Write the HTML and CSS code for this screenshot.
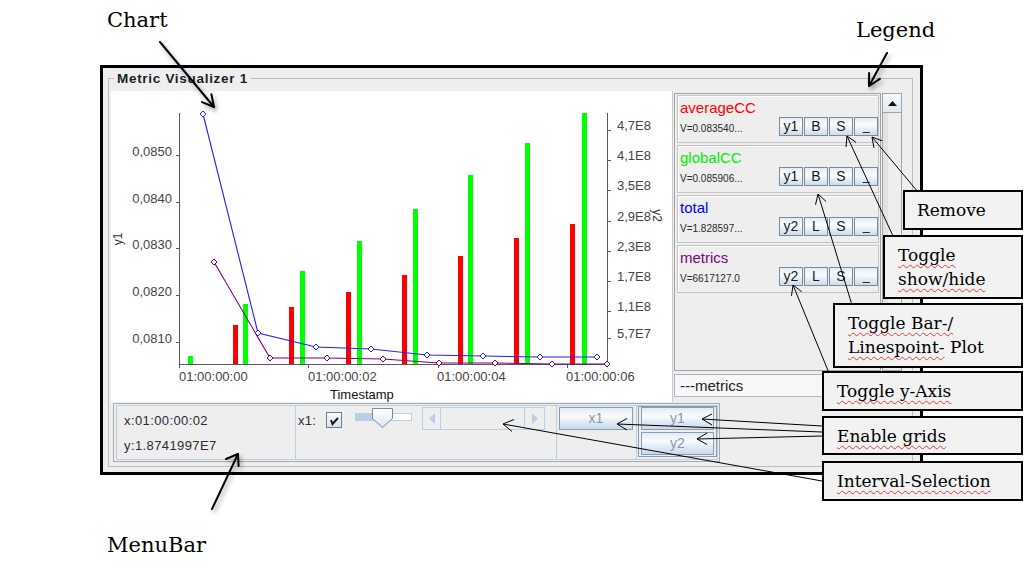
FILE: index.html
```html
<!DOCTYPE html>
<html>
<head>
<meta charset="utf-8">
<title>Metric Visualizer</title>
<link rel="stylesheet" href="styles.css">
</head>
<body>
<div class="page">
  <div class="window">
    <fieldset class="titled">
      <legend class="title">Metric Visualizer 1</legend>
      <div class="main">
        <div class="chart">
          <svg width="561" height="311" viewBox="111 91 561 311" xmlns="http://www.w3.org/2000/svg">
            <defs>
              <path id="dm" d="M0,-3 L3,0 L0,3 L-3,0 Z"/>
            </defs>
            <rect x="111" y="91" width="561" height="311" fill="#fff"/>
            <g fill="#00ff00">
              <rect x="188" y="356" width="5" height="8"/>
              <rect x="243" y="304" width="5" height="60"/>
              <rect x="300" y="271" width="5" height="93"/>
              <rect x="357" y="241" width="5" height="123"/>
              <rect x="413" y="209" width="5" height="155"/>
              <rect x="468" y="175" width="5" height="189"/>
              <rect x="525" y="143" width="5" height="221"/>
              <rect x="582" y="113" width="5" height="251"/>
            </g>
            <g fill="#ff0000">
              <rect x="233" y="325" width="5" height="39"/>
              <rect x="289" y="307" width="5" height="57"/>
              <rect x="346" y="292" width="5" height="72"/>
              <rect x="402" y="275" width="5" height="89"/>
              <rect x="458" y="256" width="5" height="108"/>
              <rect x="514" y="238" width="5" height="126"/>
              <rect x="570" y="224" width="5" height="140"/>
            </g>
            <g stroke="#5a5a5a" stroke-width="1" fill="none">
              <line x1="179.5" y1="113" x2="179.5" y2="365"/>
              <line x1="179" y1="364.5" x2="608" y2="364.5"/>
              <line x1="607.5" y1="113" x2="607.5" y2="365"/>
              <line x1="176" y1="155.5" x2="179" y2="155.5"/>
              <line x1="176" y1="202.5" x2="179" y2="202.5"/>
              <line x1="176" y1="248.5" x2="179" y2="248.5"/>
              <line x1="176" y1="295.5" x2="179" y2="295.5"/>
              <line x1="176" y1="342.5" x2="179" y2="342.5"/>
              <line x1="179.5" y1="365" x2="179.5" y2="368"/>
              <line x1="308.5" y1="365" x2="308.5" y2="368"/>
              <line x1="438.5" y1="365" x2="438.5" y2="368"/>
              <line x1="567.5" y1="365" x2="567.5" y2="368"/>
              <line x1="608" y1="130.5" x2="611" y2="130.5"/>
              <line x1="608" y1="160.5" x2="611" y2="160.5"/>
              <line x1="608" y1="190.5" x2="611" y2="190.5"/>
              <line x1="608" y1="221.5" x2="611" y2="221.5"/>
              <line x1="608" y1="251.5" x2="611" y2="251.5"/>
              <line x1="608" y1="281.5" x2="611" y2="281.5"/>
              <line x1="608" y1="311.5" x2="611" y2="311.5"/>
              <line x1="608" y1="338.5" x2="611" y2="338.5"/>
            </g>
            <g class="ticklbl" text-anchor="end">
              <text x="172" y="156">0,0850</text>
              <text x="172" y="203">0,0840</text>
              <text x="172" y="249">0,0830</text>
              <text x="172" y="296">0,0820</text>
              <text x="172" y="343">0,0810</text>
            </g>
            <g class="ticklbl">
              <text x="179" y="381">01:00:00:00</text>
              <text x="308" y="381">01:00:00:02</text>
              <text x="437" y="381">01:00:00:04</text>
              <text x="566" y="381">01:00:00:06</text>
              <text x="617" y="130">4,7E8</text>
              <text x="617" y="160">4,1E8</text>
              <text x="617" y="190">3,5E8</text>
              <text x="617" y="221">2,9E8</text>
              <text x="617" y="251">2,3E8</text>
              <text x="617" y="281">1,7E8</text>
              <text x="617" y="311">1,1E8</text>
              <text x="617" y="338">5,7E7</text>
            </g>
            <text class="axlbl" transform="translate(121.5,239) rotate(-90)" text-anchor="middle">y1</text>
            <text class="axlbl" transform="translate(652.5,215.5) rotate(90)" text-anchor="middle">y2</text>
            <text class="axname" x="330" y="399">Timestamp</text>
            <polyline fill="none" stroke="#800080" stroke-width="1.1" points="214,262 270,358 327,358 383,359 439,363 495,363 552,364 607,364"/>
            <polyline fill="none" stroke="#1f1fff" stroke-width="1.1" points="203,114 258,333 316,347 371,349 427,355 483,356 540,357 597,357"/>
            <g fill="#fff" stroke="#800080" stroke-width="1">
              <use href="#dm" x="214" y="262"/>
              <use href="#dm" x="270" y="358"/>
              <use href="#dm" x="327" y="358"/>
              <use href="#dm" x="383" y="359"/>
              <use href="#dm" x="439" y="363"/>
              <use href="#dm" x="495" y="363"/>
              <use href="#dm" x="552" y="364"/>
              <use href="#dm" x="607" y="364"/>
            </g>
            <g fill="#fff" stroke="#1f1fff" stroke-width="1">
              <use href="#dm" x="203" y="114"/>
              <use href="#dm" x="258" y="333"/>
              <use href="#dm" x="316" y="347"/>
              <use href="#dm" x="371" y="349"/>
              <use href="#dm" x="427" y="355"/>
              <use href="#dm" x="483" y="356"/>
              <use href="#dm" x="540" y="357"/>
              <use href="#dm" x="597" y="357"/>
            </g>
          </svg>
        </div>
        <div class="legendcol">
          <div class="legendrow">
            <div class="list">
              <div class="entry">
                <div class="name c-red">averageCC</div>
                <div class="erow">
                  <span class="val">V=0.083540...</span>
                  <button class="lbtn">y1</button><button class="lbtn">B</button><button class="lbtn">S</button><button class="lbtn minus">–</button>
                </div>
              </div>
              <div class="entry">
                <div class="name c-green">globalCC</div>
                <div class="erow">
                  <span class="val">V=0.085906...</span>
                  <button class="lbtn">y1</button><button class="lbtn">B</button><button class="lbtn">S</button><button class="lbtn minus">–</button>
                </div>
              </div>
              <div class="entry">
                <div class="name c-blue">total</div>
                <div class="erow">
                  <span class="val">V=1.828597...</span>
                  <button class="lbtn">y2</button><button class="lbtn">L</button><button class="lbtn">S</button><button class="lbtn minus">–</button>
                </div>
              </div>
              <div class="entry">
                <div class="name c-purple">metrics</div>
                <div class="erow">
                  <span class="val">V=6617127.0</span>
                  <button class="lbtn">y2</button><button class="lbtn">L</button><button class="lbtn">S</button><button class="lbtn minus">–</button>
                </div>
              </div>
            </div>
            <div class="vscroll">
              <div class="vup"><svg width="9" height="5" viewBox="0 0 9 5"><polygon points="0,5 4.5,0 9,5" fill="#111"/></svg></div>
              <div class="vtrack"></div>
            </div>
          </div>
          <div class="combo">---metrics</div>
        </div>
      </div>
      <div class="menubar">
        <div class="sec s1">
          <div class="coord">x:01:00:00:02</div>
          <div class="coord">y:1.8741997E7</div>
        </div>
        <div class="sec s2">
          <span class="x1lbl">x1:</span>
          <span class="check"><svg width="14" height="14" viewBox="0 0 14 14"><polyline points="4,7 5.5,11 11,5" fill="none" stroke="#1a1a1a" stroke-width="2"/></svg></span>
          <svg class="slider" width="57" height="22" viewBox="0 0 57 22">
            <defs>
              <linearGradient id="tg" x1="0" y1="0" x2="0" y2="1">
                <stop offset="0" stop-color="#ffffff"/>
                <stop offset="1" stop-color="#dce6f0"/>
              </linearGradient>
            </defs>
            <rect x="0.5" y="6.5" width="56" height="7" fill="#fff" stroke="#b8cfe5"/>
            <rect x="1" y="7" width="18" height="6" fill="#b8cfe5"/>
            <polygon points="17.5,1.5 37.5,1.5 37.5,11.5 27.5,20.5 17.5,11.5" fill="url(#tg)" stroke="#7a8a99"/>
          </svg>
          <div class="hscroll">
            <span class="hbtn hl"><svg width="6" height="11" viewBox="0 0 6 11"><polygon points="6,0 0,5.5 6,11" fill="#b8cfe5"/></svg></span>
            <span class="htrack"></span>
            <span class="hbtn hr"><svg width="6" height="11" viewBox="0 0 6 11"><polygon points="0,0 6,5.5 0,11" fill="#b8cfe5"/></svg></span>
          </div>
        </div>
        <div class="sec s3">
          <button class="gbtn">x1</button>
        </div>
        <div class="sec s4">
          <div class="ybox">
            <button class="gbtn">y1</button>
            <button class="gbtn">y2</button>
          </div>
        </div>
      </div>
    </fieldset>
  </div>

  <svg class="notes" width="1032" height="569" viewBox="0 0 1032 569" xmlns="http://www.w3.org/2000/svg">
    <g class="thick" fill="none" stroke="#000" stroke-width="2" stroke-linecap="round" stroke-linejoin="round">
      <line x1="160" y1="42" x2="214" y2="107"/>
      <polyline points="211.4,94.3 214,107 202,102.1"/>
      <line x1="887" y1="53" x2="869" y2="86"/>
      <polyline points="879.9,78.8 869,86 869.1,73"/>
      <line x1="212" y1="509" x2="238" y2="454"/>
      <polyline points="226,459 238,454 238.6,466"/>
    </g>
    <g fill="none" stroke="#000" stroke-width="1">
      <line x1="918" y1="192" x2="872" y2="137"/>
      <polyline points="873.9,147.8 872,137 882.3,140.8"/>
      <line x1="893" y1="236" x2="847" y2="136"/>
      <polyline points="846,147 847,136 856,142.4"/>
      <line x1="852" y1="305" x2="818" y2="194"/>
      <polyline points="815.5,204.7 818,194 826.1,201.5"/>
      <line x1="829" y1="373" x2="793" y2="285"/>
      <polyline points="791.5,295.9 793,285 801.7,291.7"/>
      <line x1="822" y1="432" x2="617" y2="424"/>
      <polyline points="627,430 617,424 627,418.5"/>
      <line x1="822" y1="426" x2="702" y2="419"/>
      <polyline points="712,425 702,419 712,414"/>
      <line x1="822" y1="436" x2="697" y2="439"/>
      <polyline points="707,444.5 697,439 707,433"/>
      <line x1="822" y1="481" x2="503" y2="424"/>
      <polyline points="512,431.5 503,424 514,419.5"/>
    </g>
  </svg>

  <div class="big l-chart">Chart</div>
  <div class="big l-legend">Legend</div>
  <div class="big l-menubar">MenuBar</div>

  <div class="note n-remove">Remove</div>
  <div class="note n-show"><span class="sp">Toggle</span><br><span class="sp">show/hide</span></div>
  <div class="note n-bar"><span class="sp">Toggle Bar-/</span><br><span class="sp">Linespoint-</span> Plot</div>
  <div class="note n-yaxis"><span class="sp">Toggle y-Axis</span></div>
  <div class="note n-grids"><span class="sp">Enable grids</span></div>
  <div class="note n-interval"><span class="sp">Interval-Selection</span></div>
</div>
</body>
</html>
```

FILE: styles.css
```css
* { box-sizing: border-box; }
html, body { margin: 0; padding: 0; background: #fff; }
body { font-family: "Liberation Sans", Arial, sans-serif; }

.page { position: relative; width: 1032px; height: 569px; overflow: hidden; }

/* ---------- window ---------- */
.window {
  margin: 65px 0 0 100px;
  width: 823px;
  border: 3px solid #000;
  background: #eeeeee;
  display: flow-root;
}
.titled {
  margin: 3px 7px 5px 5px;
  padding: 5px 7px 4px 2px;
  border: 1px solid #bdbdbd;
  min-width: 0;
}
.title {
  margin-left: 3px;
  padding: 0 3px;
  font: bold 13.5px/15px "Liberation Sans", Arial, sans-serif;
  letter-spacing: 0.7px;
  color: #1c1c2a;
}
.main { display: flex; height: 311px; }

/* ---------- chart ---------- */
.chart { width: 561px; height: 311px; background: #fff; overflow: hidden; flex: none; }
.chart svg { display: block; }
.ticklbl text, .ticklbl { font: 13px "Liberation Sans", Arial, sans-serif; fill: #444; }
.axlbl { font: 12px "Liberation Sans", Arial, sans-serif; fill: #333; }
.axname { font: 13px "Liberation Sans", Arial, sans-serif; fill: #111; }

/* ---------- legend ---------- */
.legendcol {
  width: 233px;
  flex: none;
  border-left: 1px solid #c9c9c9;
  padding: 2px 3px 0 1px;
  display: flex;
  flex-direction: column;
}
.legendrow { display: flex; gap: 1px; height: 278px; }
.list {
  width: 207px;
  border: 1px solid #a3a3a3;
  padding: 1px 1px 1px 2px;
  display: flex;
  flex-direction: column;
  gap: 2px;
}
.entry {
  height: 48px;
  flex: none;
  border: 1px solid #c4c4c4;
  box-shadow: inset 1px 1px 0 #fff;
  padding: 3px 0 0 2px;
}
.name { font-size: 15px; line-height: 17px; height: 17px; }
.c-red { color: #ff0000; }
.c-green { color: #00ee00; }
.c-blue { color: #0000ff; }
.c-purple { color: #800080; }
.erow { display: flex; align-items: center; height: 19px; margin-top: 1px; }
.val { flex: 1; font-size: 10px; color: #2a2a2a; padding-top: 4px; white-space: nowrap; }
.lbtn {
  width: 24px;
  height: 19px;
  margin: 0 0 0 1px;
  padding: 0;
  border: 1px solid #7a8a99;
  background: linear-gradient(to bottom, #e3ecf5 0%, #fbfdff 40%, #e6eef6 65%, #cddcea 100%);
  font: 14px/17px "Liberation Sans", Arial, sans-serif;
  color: #1a1a1a;
  display: flex;
  align-items: center;
  justify-content: center;
}
.lbtn.minus { font-size: 13px; padding-top: 9px; }

.vscroll {
  width: 20px;
  border: 1px solid #a3a3a3;
  background: #eeeeee;
  display: flex;
  flex-direction: column;
}
.vup {
  height: 19px;
  border-bottom: 1px solid #a3a3a3;
  background: linear-gradient(to bottom, #f6f9fc, #dfe8f1);
  display: flex;
  align-items: center;
  justify-content: center;
}
.vup svg { display: block; }
.vtrack { flex: 1; border-left: 5px solid #e2e2e2; }

.combo {
  margin-top: 3px;
  height: 23px;
  border: 1px solid #a3b8cc;
  background: #f7f7f7;
  font-size: 15px;
  line-height: 21px;
  padding-left: 5px;
  color: #222;
}

/* ---------- menubar ---------- */
.menubar {
  display: flex;
  width: 607px;
  height: 59px;
  margin: 1px 0 0 2px;
  border: 1px solid #a9a9a9;
  padding: 1px 1px 1px 2px;
}
.sec {
  height: 55px;
  flex: none;
  border-top: 1px solid #b8cfe5;
  border-bottom: 1px solid #b8cfe5;
  border-right: 1px solid #b8cfe5;
}
.s1 { width: 180px; border-left: 1px solid #b8cfe5; padding: 2px 0 0 7px; }
.coord { font-size: 13px; line-height: 25px; letter-spacing: 0.4px; color: #2b2b35; }
.s2 { width: 261px; display: flex; align-items: flex-start; padding-left: 2px; }
.x1lbl { width: 19px; margin-top: 7px; font-size: 13px; line-height: 16px; letter-spacing: 0.3px; color: #2b2b35; }
.check {
  width: 16px;
  height: 16px;
  margin: 6px 0 0 9px;
  border: 1px solid #6f7d8a;
  background: linear-gradient(to bottom, #fafcfe, #d7e3ef);
  display: flex;
  align-items: center;
  justify-content: center;
}
.check svg { display: block; }
.slider { display: block; margin: 1px 0 0 13px; }
.hscroll {
  width: 123px;
  height: 23px;
  margin: 1px 0 0 10px;
  border: 1px solid #b8cfe5;
  display: flex;
}
.hbtn { width: 18px; display: flex; align-items: center; justify-content: center; }
.hbtn svg { display: block; }
.hl { border-right: 1px solid #b8cfe5; }
.hr { width: 20px; border-left: 1px solid #b8cfe5; }
.htrack { flex: 1; }

.s3 { width: 80px; padding: 1px 0 0 2px; }
.s4 { width: 81px; }
.ybox {
  width: 79px;
  height: 51px;
  margin: 0 0 0 1px;
  border: 1px solid #8a9cb0;
  padding: 0 2px;
  display: flex;
  flex-direction: column;
  gap: 2px;
}
.gbtn {
  width: 74px;
  height: 23px;
  flex: none;
  margin: 0;
  padding: 0;
  border: 1px solid #8a9cb0;
  background: linear-gradient(to bottom, #e1eaf3 0%, #fafcfe 40%, #e3ecf5 65%, #c9d9e9 100%);
  font: 14px/21px "Liberation Sans", Arial, sans-serif;
  color: #8797aa;
  text-align: center;
}
.ybox .gbtn { width: 73px; }

/* ---------- annotations ---------- */
.notes { position: absolute; left: 0; top: 0; pointer-events: none; }
.thick { filter: drop-shadow(2px 3px 2px rgba(0, 0, 0, 0.35)); }

.big {
  position: absolute;
  font: 21px/24px "DejaVu Serif", serif;
  color: #000;
  white-space: nowrap;
}
.l-chart { left: 107px; top: 8px; }
.l-legend { left: 856px; top: 18px; }
.l-menubar { left: 107px; top: 533px; }

.note {
  position: absolute;
  border: 2px solid #000;
  background: #f2f2f2;
  font: 17px/24px "DejaVu Serif", serif;
  color: #000;
  padding: 6px 0 0 13px;
  white-space: nowrap;
}
.sp {
  text-decoration: underline wavy #e23b3b;
  text-decoration-thickness: 1px;
  text-underline-offset: 3px;
  text-decoration-skip-ink: none;
}
.n-remove { left: 903px; top: 190px; width: 120px; height: 40px; padding-left: 12px; }
.n-show { left: 883px; top: 235px; width: 140px; height: 64px; }
.n-bar { left: 833px; top: 303px; width: 190px; height: 65px; }
.n-yaxis { left: 822px; top: 371px; width: 201px; height: 40px; }
.n-grids { left: 822px; top: 416px; width: 201px; height: 39px; }
.n-interval { left: 822px; top: 461px; width: 201px; height: 40px; }
```
